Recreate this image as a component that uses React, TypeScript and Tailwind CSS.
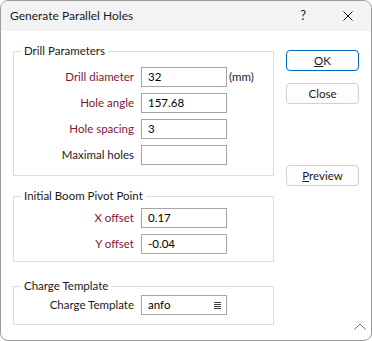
import React from "react";

const red = "text-[#7f1535]";

function Field({ label, value, warn, suffix, menu }: { label: string; value?: string; warn?: boolean; suffix?: string; menu?: boolean }) {
  return (
    <div className="flex items-center">
      <span className={`w-[120px] text-right leading-[14px] ${warn ? red : "text-[#1a1a1a]"}`}>{label}</span>
      <div className="ml-[7px] w-[86px] h-[20px] border border-[#a5a5a5] bg-white flex items-center pl-[6px] pr-[4px] text-black">
        <span className="flex-1 leading-[14px]">{value}</span>
        {menu && (
          <svg width="7" height="7" viewBox="0 0 7 7" className="mr-[1px]">
            <rect x="0" y="0" width="7" height="1" fill="#404040" />
            <rect x="0" y="2" width="7" height="1" fill="#404040" />
            <rect x="0" y="4" width="7" height="1" fill="#404040" />
            <rect x="0" y="6" width="7" height="1" fill="#404040" />
          </svg>
        )}
      </div>
      {suffix && <span className="ml-[2px] leading-[14px] text-[#1a1a1a]">{suffix}</span>}
    </div>
  );
}

function Group({ title, className, children }: { title: string; className: string; children: React.ReactNode }) {
  return (
    <fieldset className={`border border-[#dcdcdc] ${className}`}>
      <legend className="ml-[7px] px-[3px] leading-[14px] text-[#1a1a1a]">{title}</legend>
      {children}
    </fieldset>
  );
}

function Btn({ children, primary, className = "" }: { children: React.ReactNode; primary?: boolean; className?: string }) {
  return (
    <button
      className={`w-[73px] h-[21px] rounded-[4px] bg-[#fdfdfd] flex items-center justify-center leading-[14px] text-[#1a1a1a] ${
        primary ? "border-[1.5px] border-[#0067c0]" : "border border-[#d0d0d0]"
      } ${className}`}
    >
      {children}
    </button>
  );
}

export default function App() {
  return (
    <div
      className="relative w-[372px] h-[341px] border border-[#9c9c9c] rounded-[8px] overflow-hidden bg-white flex flex-col text-[11.5px]"
      style={{ fontFamily: "Lato, 'Noto Sans', sans-serif" }}
    >
      {/* Title bar */}
      <div className="h-[30px] shrink-0 bg-[#f3f3f3] flex items-center pl-[9px]">
        <span className="text-[12px] text-[#1a1a1a]">Generate Parallel Holes</span>
        <span className="ml-auto text-[13px] text-[#1a1a1a]">?</span>
        <svg width="10" height="10" viewBox="0 0 10 10" className="ml-[37px] mr-[18px]">
          <path d="M0.5 0.5L9.5 9.5M9.5 0.5L0.5 9.5" stroke="#1a1a1a" strokeWidth="1" />
        </svg>
      </div>

      {/* Body */}
      <div className="flex pl-[12px]">
        <div className="w-[261px] flex flex-col pt-[13px]">
          <Group title="Drill Parameters" className="pt-[9px] pb-[10px]">
            <div className="flex flex-col gap-[6px]">
              <Field label="Drill diameter" value="32" warn suffix="(mm)" />
              <Field label="Hole angle" value="157.68" warn />
              <Field label="Hole spacing" value="3" warn />
              <Field label="Maximal holes" />
            </div>
          </Group>
          <Group title="Initial Boom Pivot Point" className="mt-[13px] pt-[5px] pb-[7px]">
            <div className="flex flex-col gap-[6px]">
              <Field label="X offset" value="0.17" warn />
              <Field label="Y offset" value="-0.04" warn />
            </div>
          </Group>
          <Group title="Charge Template" className="mt-[17px] pt-[2px] pb-[9px]">
            <Field label="Charge Template" value="anfo" menu />
          </Group>
        </div>

        <div className="ml-[12px] flex flex-col pt-[19px]">
          <Btn primary>
            <span><span className="underline">O</span>K</span>
          </Btn>
          <Btn className="mt-[12px]">Close</Btn>
          <Btn className="mt-[61px]">
            <span><span className="underline">P</span>review</span>
          </Btn>
        </div>
      </div>

      {/* Size grip */}
      <svg width="12" height="7" viewBox="0 0 12 7" className="absolute right-[5px] bottom-[10px]">
        <path d="M0.5 6.5L6 1L11.5 6.5" fill="none" stroke="#6a6a6a" strokeWidth="1" />
      </svg>
    </div>
  );
}
